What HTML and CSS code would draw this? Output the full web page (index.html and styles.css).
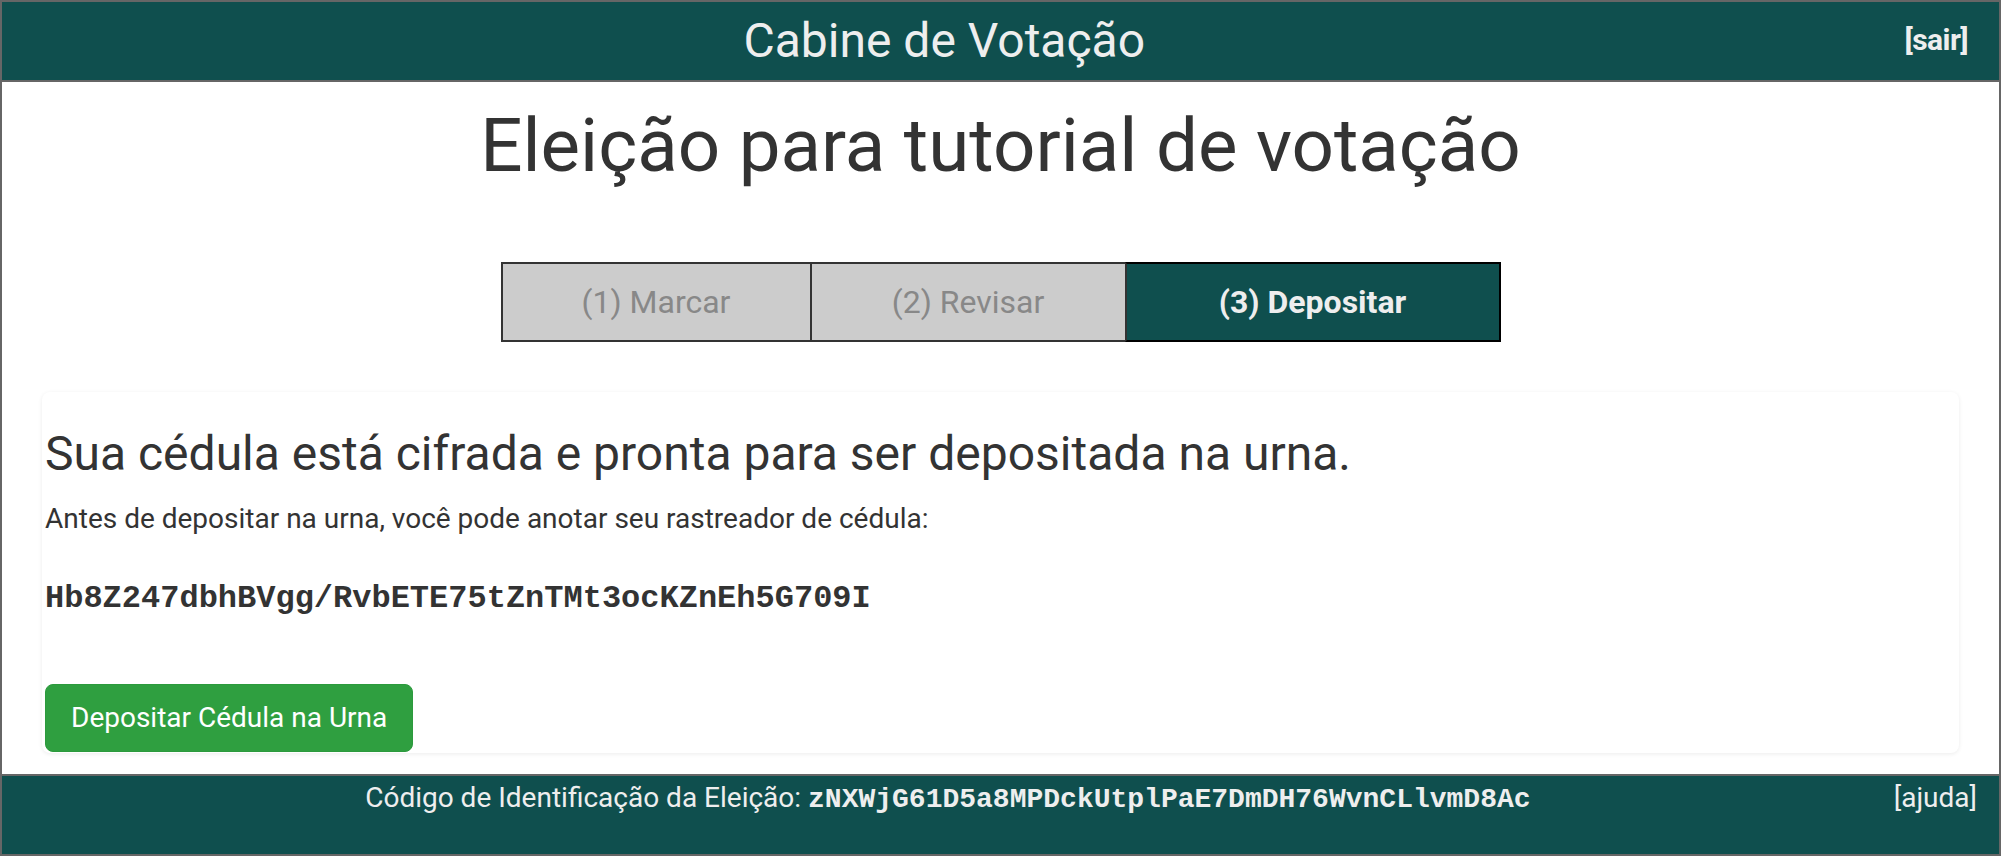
FILE: index.html
```html
<!DOCTYPE html>
<html lang="pt-BR">
<head>
<meta charset="utf-8">
<title>Cabine de Votação</title>
<link rel="stylesheet" href="styles.css">
</head>
<body>
<div class="frame">
  <header class="topbar">
    <div class="topbar-title">Cabine de Votação</div>
    <a class="topbar-link" href="#">[sair]</a>
  </header>
  <main class="content">
    <h1 class="election-title">Eleição para tutorial de votação</h1>
    <div class="steps">
      <div class="step step-one">(1) Marcar</div>
      <div class="step step-two">(2) Revisar</div>
      <div class="step step-active">(3) Depositar</div>
    </div>
    <section class="card">
      <h3 class="card-title">Sua cédula está cifrada e pronta para ser depositada na urna.</h3>
      <p class="card-text">Antes de depositar na urna, você pode anotar seu rastreador de cédula:</p>
      <div class="tracker">Hb8Z247dbhBVgg/RvbETE75tZnTMt3ocKZnEh5G709I</div>
      <button class="btn-cast" type="button">Depositar Cédula na Urna</button>
    </section>
  </main>
  <footer class="bottombar">
    <div class="bottombar-text">Código de Identificação da Eleição: <span class="hash">zNXWjG61D5a8MPDckUtplPaE7DmDH76WvnCLlvmD8Ac</span></div>
    <a class="bottombar-link" href="#">[ajuda]</a>
  </footer>
</div>
</body>
</html>
```
FILE: styles.css
```css
html, body {
  margin: 0;
  padding: 0;
}
body {
  font-family: Roboto, "Liberation Sans", sans-serif;
  color: #333;
  background: #fff;
}
.frame {
  box-sizing: border-box;
  height: 856px;
  border: 2px solid #666;
  display: flex;
  flex-direction: column;
}
.topbar {
  flex: none;
  height: 78px;
  background: #0f4f4e;
  border-bottom: 2px solid #666;
  display: grid;
  grid-template-columns: 1fr auto;
  color: #eeeeee;
}
.topbar-title {
  text-align: center;
  font-size: 48px;
  line-height: 78px;
}
.topbar-link {
  font-size: 30px;
  font-weight: 700;
  letter-spacing: -0.6px;
  line-height: normal;
  color: #eeeeee;
  text-decoration: none;
  padding: 20px 31px 0 18px;
}
.content {
  flex: 1;
  display: flex;
  flex-direction: column;
}
.election-title {
  margin: 24px 0 0;
  font-size: 74.5px;
  font-weight: 400;
  line-height: 80px;
  text-align: center;
  color: #333;
}
.steps {
  display: flex;
  width: 1000px;
  height: 80px;
  margin: 76px auto 0;
}
.step {
  box-sizing: border-box;
  height: 80px;
  border: 2px solid #333;
  background: #cccccc;
  color: #888;
  font-size: 32px;
  display: flex;
  align-items: center;
  justify-content: center;
}
.step-one {
  width: 311px;
}
.step-two {
  width: 317px;
  margin-left: -2px;
}
.step-active {
  width: 376px;
  margin-left: -2px;
  background: #0f4f4e;
  color: #eeeeee;
  font-weight: 700;
  border-color: #000;
  border-left-color: #333;
}
.card {
  margin: 50px 40px 0;
  padding: 36px 3px 1px;
  border-radius: 8px;
  box-shadow: 0 1px 4px rgba(0, 0, 0, 0.08);
}
.card-title {
  margin: 0;
  font-size: 48px;
  font-weight: 400;
  line-height: 1.1;
  color: #333;
}
.card-text {
  margin: 18px 0 0;
  font-size: 28px;
  line-height: 40px;
}
.tracker {
  margin-top: 38px;
  font-family: "Liberation Mono", monospace;
  font-weight: 700;
  font-size: 32px;
  line-height: 44px;
  color: #333;
}
.btn-cast {
  display: block;
  margin-top: 63px;
  padding: 12px 25px;
  border: 1px solid #2c9a3d;
  border-radius: 8px;
  background: #2f9f40;
  color: #fff;
  font-family: Roboto, "Liberation Sans", sans-serif;
  font-size: 28px;
  line-height: 42px;
}
.bottombar {
  flex: none;
  box-sizing: border-box;
  height: 80px;
  padding-top: 2px;
  border-top: 2px solid #666;
  background: #0f4f4e;
  display: grid;
  grid-template-columns: 1fr auto;
  align-items: start;
  color: #eeeeee;
  font-size: 28px;
  line-height: 40px;
}
.bottombar-text {
  text-align: center;
}
.hash {
  font-family: "Liberation Mono", monospace;
  font-weight: 700;
  font-size: 28px;
}
.bottombar-link {
  padding-right: 22px;
  color: #eeeeee;
  text-decoration: none;
}
```
